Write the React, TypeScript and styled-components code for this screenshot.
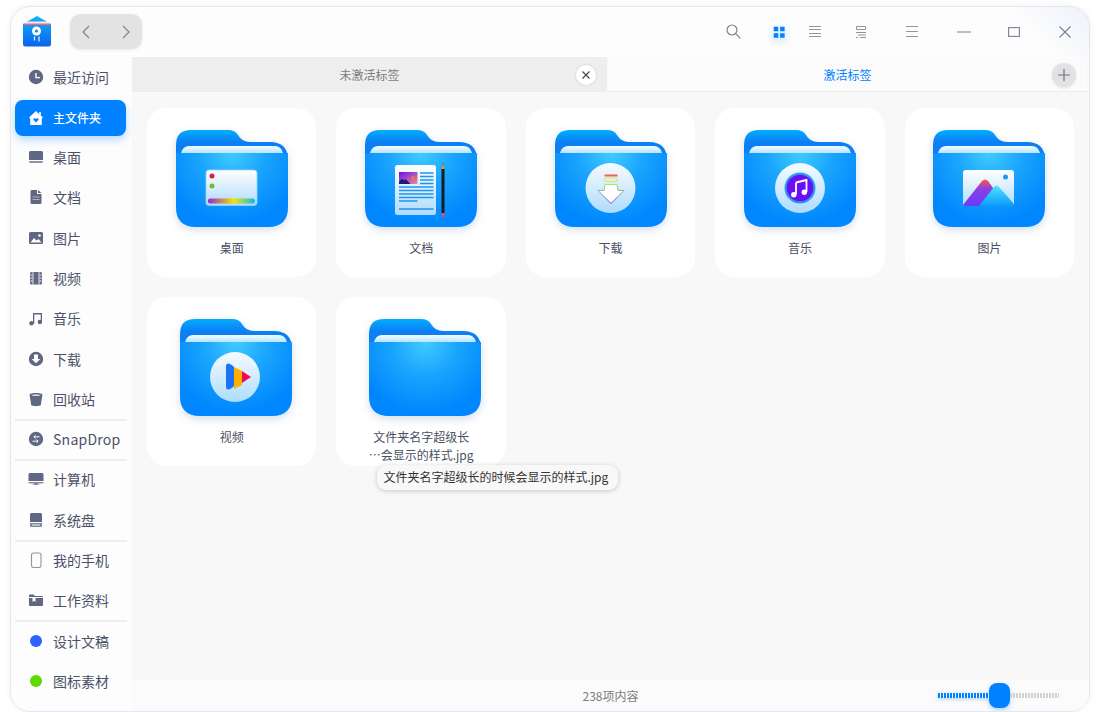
import React from "react";
import styled, { createGlobalStyle } from "styled-components";

const Global = createGlobalStyle`
  html, body { margin: 0; padding: 0; background: #fff; }
  * { box-sizing: border-box; }
  body { font-family: "Noto Sans CJK SC", "Noto Sans", sans-serif; }
`;

const Page = styled.div`
  width: 1100px;
  height: 712px;
  padding: 6px 10px 0;
  overflow: hidden;
`;
const Win = styled.div`
  height: 706px;
  display: flex;
  flex-direction: column;
  border: 1px solid #e6e7ec;
  border-radius: 20px;
  overflow: hidden;
  background: linear-gradient(225deg, #eef2fb 0, #fdfdfd 60px, #fdfdfd 100%);
  box-shadow: 0 0 6px rgba(0, 0, 0, 0.06);
`;
const TitleBar = styled.header`
  height: 50px;
  flex: none;
  display: flex;
  align-items: center;
  padding: 0 14px 1px 11px;
`;
const Logo = styled.svg`
  width: 30px;
  height: 31px;
  margin-right: 18px;
`;
const NavGroup = styled.div`
  width: 72px;
  height: 35px;
  border-radius: 10px;
  background: #e3e3e3;
  box-shadow: 0 1px 3px rgba(0, 0, 0, 0.08);
  display: flex;
  align-items: center;
  justify-content: space-between;
  padding: 0 10px;
`;
const Actions = styled.div`
  margin-left: auto;
  display: flex;
  align-items: center;
`;
const Action = styled.button<{ $after?: number; $active?: boolean }>`
  width: 20px;
  height: 20px;
  padding: 0;
  border: 0;
  background: none;
  display: flex;
  align-items: center;
  justify-content: center;
  margin-right: ${(p) => p.$after ?? 0}px;
  color: ${(p) => (p.$active ? "#0081ff" : "#7b8193")};
  filter: ${(p) => (p.$active ? "drop-shadow(0 3px 4px rgba(0,129,255,.35))" : "none")};
`;
const Body = styled.div`
  flex: 1;
  min-height: 0;
  display: flex;
`;
const Sidebar = styled.nav`
  width: 121px;
  flex: none;
  display: flex;
  flex-direction: column;
  padding-top: 0.5px;
`;
const NavItem = styled.div<{ $active?: boolean; $latin?: boolean }>`
  height: 36px;
  margin: 2.15px 6px 2.15px 4px;
  flex: none;
  padding: 0 0 ${(p) => (p.$active ? 0 : 2)}px 13px;
  display: flex;
  align-items: center;
  gap: 9px;
  border-radius: 8px;
  white-space: nowrap;
  font-size: ${(p) => (p.$active ? 12 : 14)}px;
  font-weight: ${(p) => (p.$active ? 500 : 400)};
  letter-spacing: ${(p) => (p.$latin ? "0.25px" : "0")};
  color: ${(p) => (p.$active ? "#fff" : "#4b5268")};
  background: ${(p) => (p.$active ? "#0081ff" : "transparent")};
  box-shadow: ${(p) => (p.$active ? "0 4px 8px rgba(0,129,255,.28)" : "none")};
  svg { flex: none; color: ${(p) => (p.$active ? "#fff" : "#5f6782")}; }
`;
const Rule = styled.div`
  height: 2px;
  margin: -1px 5px -1px 4px;
  background: #eeeef0;
  flex: none;
`;
const Dot = styled.span<{ $color: string }>`
  width: 12px;
  height: 12px;
  margin: 0 2px;
  border-radius: 50%;
  background: ${(p) => p.$color};
  flex: none;
`;
const Main = styled.main`
  flex: 1;
  min-width: 0;
  display: flex;
  flex-direction: column;
  background: #f8f8f8;
`;
const Tabs = styled.div`
  height: 35px;
  flex: none;
  display: flex;
  gap: 1px;
  font-size: 12px;
  margin-right: 2px;
`;
const Tab = styled.div<{ $active?: boolean }>`
  flex: ${(p) => (p.$active ? "1" : "0 0 475px")};
  position: relative;
  display: flex;
  align-items: center;
  justify-content: center;
  color: ${(p) => (p.$active ? "#0081ff" : "#7c7c7c")};
  background: ${(p) => (p.$active ? "#fbfbfb" : "#eeeeee")};
  border-bottom: 1px solid #ececec;
`;
const TabClose = styled.button`
  position: absolute;
  right: 11px;
  top: 7.5px;
  width: 20px;
  height: 20px;
  padding: 0;
  border: 0;
  border-radius: 50%;
  background: #fff;
  box-shadow: 0 0 3px rgba(0, 0, 0, 0.14);
  display: flex;
  align-items: center;
  justify-content: center;
`;
const TabAdd = styled.button`
  position: absolute;
  right: 11px;
  top: 5.5px;
  width: 24px;
  height: 24px;
  padding: 0;
  border: 0;
  border-radius: 50%;
  background: #e2e2e2;
  box-shadow: 0 1px 3px rgba(0, 0, 0, 0.1);
  display: flex;
  align-items: center;
  justify-content: center;
`;
const Content = styled.section`
  flex: 1;
  min-height: 0;
  padding: 16px 14px 0 15px;
  display: grid;
  grid-template-columns: repeat(5, 169.45px);
  grid-auto-rows: 169px;
  gap: 20px;
  align-content: start;
`;
const Card = styled.article`
  position: relative;
  background: #fff;
  border-radius: 20px;
  padding-top: 22px;
  display: flex;
  flex-direction: column;
  align-items: center;
`;
const FolderSvg = styled.svg<{ $shift?: boolean }>`
  width: 112px;
  height: 97px;
  flex: none;
  overflow: visible;
  margin-left: ${(p) => (p.$shift ? 8 : 0)}px;
  filter: drop-shadow(0 3px 4px rgba(0, 60, 130, 0.17));
`;
const Label = styled.div`
  margin-top: 12px;
  font-size: 12px;
  line-height: 17.5px;
  color: #4a4f64;
  text-align: center;
  white-space: nowrap;
`;
const Tip = styled.div`
  position: absolute;
  left: 41px;
  top: 168px;
  width: 241px;
  height: 25px;
  padding-left: 6px;
  border-radius: 9px;
  background: #f8f8f8;
  box-shadow: 0 1px 5px rgba(0, 0, 0, 0.2);
  font-size: 12px;
  line-height: 24px;
  color: #333;
  white-space: nowrap;
  z-index: 2;
`;
const StatusBar = styled.footer`
  height: 32px;
  flex: none;
  display: grid;
  grid-template-columns: 1fr auto 1fr;
  align-items: center;
  background: #fbfbfb;
  font-size: 12px;
  color: #7c7c7c;
`;
const StatusText = styled.span`
  grid-column: 2;
`;
const Slider = styled.div`
  grid-column: 3;
  justify-self: end;
  margin-right: 30px;
  display: flex;
  align-items: center;
`;
const Track = styled.div<{ $w: number; $on?: boolean }>`
  width: ${(p) => p.$w}px;
  height: 5px;
  background: repeating-linear-gradient(
    90deg,
    ${(p) => (p.$on ? "#0081ff" : "#d2d2d2")} 0 2px,
    transparent 2px 3px
  );
  box-shadow: ${(p) => (p.$on ? "0 1px 4px rgba(0,129,255,.35)" : "none")};
`;
const Thumb = styled.div`
  width: 21px;
  height: 25px;
  border-radius: 8px;
  background: #0081ff;
  box-shadow: 0 2px 5px rgba(0, 129, 255, 0.35);
`;

const Ico: React.FC<{ children: React.ReactNode; size?: number }> = ({ children, size = 16 }) => (
  <svg width={size} height={size} viewBox="0 0 16 16" fill="currentColor" aria-hidden="true">
    {children}
  </svg>
);

const sidebarIcons: Record<string, React.ReactNode> = {
  clock: (
    <>
      <circle cx="8" cy="8" r="7.2" />
      <path d="M8 4v4.6h4" fill="none" stroke="#fff" strokeWidth="1.4" />
    </>
  ),
  home: (
    <>
      <path d="M8 1 1 7.6l1.2 1V15h11.600V8.600l1.200-1-2.200-2V2h-1.600v2.200z" />
      <path d="M8 12.500 5.600 10c-1-1.200.9-2.600 2.400-1.200 1.500-1.400 3.400 0 2.400 1.200z" fill="#0081ff" />
    </>
  ),
  desktop: (
    <>
      <path d="M2.500 2h11A1.500 1.500 0 0 1 15 3.500V11H1V3.500A1.500 1.500 0 0 1 2.500 2z" />
      <path d="M1 12h14v.5a1.500 1.500 0 0 1-1.500 1.500h-11A1.500 1.500 0 0 1 1 12.500z" opacity=".7" />
    </>
  ),
  doc: (
    <>
      <path d="M3.500 1H9v4h4.500v8.500A1.500 1.500 0 0 1 12 15H4a1.500 1.500 0 0 1-1.500-1.500v-11A1.500 1.500 0 0 1 3.500 1z" />
      <path d="M10 1l3.500 3H10z" />
      <path d="M4.500 8h7M4.500 10.500h7" stroke="#fff" strokeOpacity=".5" />
    </>
  ),
  image: (
    <>
      <rect x="1" y="2" width="14" height="12" rx="1.600" />
      <path d="M2.500 12.500 6 8l2.500 2.600L10.500 9l3 3.500z" fill="#fff" />
      <circle cx="11.500" cy="5.500" r="1.300" fill="#fff" />
    </>
  ),
  video: (
    <>
      <rect x="2" y="2" width="12" height="12.500" rx="1.500" />
      <path d="M5 2v12.500M11 2v12.500" stroke="#fff" strokeOpacity=".8" />
      <path d="M2.500 5h2M2.500 8h2M2.500 11h2M11.500 5h2M11.500 8h2M11.500 11h2" stroke="#fff" />
    </>
  ),
  music: (
    <>
      <path d="M5 3h9v9.500h-1.300V4.500H6.300V13.500H5z" />
      <circle cx="3.500" cy="13.300" r="2.200" />
      <circle cx="11.800" cy="12" r="2.200" />
    </>
  ),
  download: (
    <>
      <circle cx="8" cy="8" r="7.200" />
      <path d="M6 3.500h4V8h2.400L8 12.300 3.600 8H6z" fill="#fff" />
    </>
  ),
  trash: <path d="M1.500 3.500C3 1.500 13 1.500 14.500 3.500L12.800 14c-.3 1.500-9.300 1.500-9.600 0zM3.200 4.200c2 .8 7.600.8 9.600 0-2-1-7.600-1-9.600 0z" fillRule="evenodd" />,
  snap: (
    <>
      <circle cx="8" cy="8" r="7.200" />
      <path d="M11.500 5.800H6M7.500 4.200 5.800 5.800l1.700 1.600M4.500 10.200H10M8.500 8.600l1.700 1.600-1.700 1.600" fill="none" stroke="#fff" strokeWidth="1" />
    </>
  ),
  computer: (
    <>
      <path d="M2 2h12a1.500 1.500 0 0 1 1.500 1.500V10H.5V3.500A1.500 1.500 0 0 1 2 2z" />
      <path d="M.5 11h15c0 1-.5 1.500-1.500 1.500H10v1h1.500v.5h-7v-.5H6v-1H2c-1 0-1.500-.5-1.500-1.500z" opacity=".75" />
    </>
  ),
  disk: (
    <>
      <path d="M3.500 1h9A1.500 1.500 0 0 1 14 2.500V10H2V2.500A1.500 1.500 0 0 1 3.500 1z" />
      <path d="M2 11h12v2.500a1.500 1.500 0 0 1-1.500 1.500h-9A1.500 1.500 0 0 1 2 13.500zM4 12.500v1h8v-1z" fillRule="evenodd" opacity=".8" />
    </>
  ),
  phone: <rect x="3.500" y="1" width="9.500" height="14.500" rx="2" fill="none" stroke="#8d94ab" strokeWidth="1.100" />,
  folder: (
    <>
      <path d="M1 5V3.500A1 1 0 0 1 2 2.500h3.500l1.500 1.500h7a1 1 0 0 1 1 1V5z" />
      <path d="M1 6h3.500v4L6 8.800 7.500 10V6H15v7a1 1 0 0 1-1 1H2a1 1 0 0 1-1-1z" />
    </>
  ),
};

type SideEntry = { label: string; icon?: string; dot?: string; active?: boolean; latin?: boolean; rule?: boolean };
const sideEntries: SideEntry[] = [
  { label: "最近访问", icon: "clock" },
  { label: "主文件夹", icon: "home", active: true },
  { label: "桌面", icon: "desktop" },
  { label: "文档", icon: "doc" },
  { label: "图片", icon: "image" },
  { label: "视频", icon: "video" },
  { label: "音乐", icon: "music" },
  { label: "下载", icon: "download" },
  { label: "回收站", icon: "trash", rule: true },
  { label: "SnapDrop", icon: "snap", latin: true, rule: true },
  { label: "计算机", icon: "computer" },
  { label: "系统盘", icon: "disk", rule: true },
  { label: "我的手机", icon: "phone" },
  { label: "工作资料", icon: "folder", rule: true },
  { label: "设计文稿", dot: "#2d63ff" },
  { label: "图标素材", dot: "#5cdb00" },
];

const Inset: React.FC<{ kind: string; id: string }> = ({ kind, id }) => {
  if (kind === "desktop")
    return (
      <>
        <rect x="30" y="40" width="51" height="35.500" rx="3" fill={`url(#${id}w)`} stroke="#9bd3fb" strokeWidth=".8" />
        <circle cx="36" cy="46" r="2.500" fill="#d8203c" />
        <circle cx="36" cy="56" r="2.500" fill="#7cb82a" />
        <rect x="32" y="68.500" width="47" height="5" rx="2" fill={`url(#${id}r)`} />
      </>
    );
  if (kind === "doc")
    return (
      <>
        <rect x="30" y="35" width="41" height="50" rx="2.500" fill={`url(#${id}w)`} />
        <rect x="34" y="42" width="18.500" height="12" fill={`url(#${id}p)`} />
        <path d="M34 54v-2l3-3.500 2 2 1.500-1.500 3 3 2 2z" fill="#1d1a78" />
        <circle cx="48" cy="48" r="1.800" fill="#ff6a55" />
        <path
          d="M55 43h13.500M55 46.500h13.500M55 50h13.500M55 53.500h13.500M34 57h34.500M34 60.500h34.500M34 64h34.500M34 67.500h34.500M34 71h18.500M34 79h34.500"
          stroke="#1e95f0"
          strokeWidth="1.300"
        />
        <path d="M76.500 39 78 32.500 79.500 39v44h-3z" fill="#1c1c22" />
        <path d="M76.500 39 78 32.500 79.500 39z" fill="#c8a26a" />
        <rect x="76.500" y="83" width="3" height="4" rx="1" fill="#e34b7e" />
      </>
    );
  if (kind === "download")
    return (
      <>
        <circle cx="55.500" cy="58" r="25" fill={`url(#${id}c)`} />
        <rect x="49.500" y="44.500" width="13" height="2" fill="#f0604f" />
        <rect x="49.500" y="48" width="13" height="3.500" rx="1.700" fill="none" stroke="#dfe35a" strokeWidth="1" />
        <path d="M50 54.500h12l1 6h6l-13 13-13-13h6z" fill="#fff" stroke={`url(#${id}a)`} strokeWidth="1" strokeLinejoin="round" />
      </>
    );
  if (kind === "music")
    return (
      <>
        <circle cx="56" cy="58" r="25" fill={`url(#${id}c)`} />
        <circle cx="56" cy="58" r="15.500" fill="#2c9ce8" />
        <circle cx="56" cy="58" r="13.300" fill="#6a0ff5" />
        <path d="M52 52.500 62.500 50v12" fill="none" stroke="#fff" strokeWidth="1.800" />
        <path d="M52 52.500V64.500" stroke="#fff" strokeWidth="1.800" />
        <circle cx="49.800" cy="64.800" r="2.700" fill="#fff" />
        <circle cx="60.300" cy="62.300" r="2.700" fill="#fff" />
      </>
    );
  if (kind === "picture")
    return (
      <>
        <rect x="30" y="40" width="51" height="36" rx="3" fill={`url(#${id}w)`} />
        <circle cx="72.500" cy="47" r="2.500" fill="#1a9af5" />
        <path d="M30 75 49 51q3-3 6 0L66 66 56 76H33q-2 0-3-1z" fill={`url(#${id}m)`} />
        <path d="M46 76 61 57q2.500-3 5 0L81 74q-.5 2-2 2z" fill={`url(#${id}n)`} />
      </>
    );
  if (kind === "video")
    return (
      <>
        <circle cx="55" cy="58" r="25" fill={`url(#${id}c)`} />
        <path d="M54 48 62 52V66L54 70z" fill="#ffb000" />
        <path d="M62 52 71 58 62 64z" fill="#f5075f" />
        <path d="M46 47q0-2.500 2-2.500c3 .5 6 3 6 4V67c-2 2-4 3.500-6 3.500q-2 0-2-2.500z" fill="#1b72f2" />
      </>
    );
  return null;
};

const Folder: React.FC<{ kind: string; shift?: boolean }> = ({ kind, shift }) => {
  const id = `f-${kind}-`;
  return (
    <FolderSvg $shift={shift} viewBox="0 0 112 97" aria-hidden="true">
      <defs>
        <linearGradient id={`${id}b`} x1="0" y1="0" x2="0" y2="1">
          <stop offset="0" stopColor="#00aeff" />
          <stop offset=".3" stopColor="#0d7ff5" />
        </linearGradient>
        <linearGradient id={`${id}s`} x1="0" y1="0" x2="0" y2="1">
          <stop offset="0" stopColor="#f4fcff" />
          <stop offset="1" stopColor="#b6e6ff" />
        </linearGradient>
        <radialGradient id={`${id}f`} gradientUnits="userSpaceOnUse" cx="56" cy="23" r="72">
          <stop offset="0" stopColor="#41cbff" />
          <stop offset=".45" stopColor="#1ba5fd" />
          <stop offset="1" stopColor="#0086fe" />
        </radialGradient>
        <linearGradient id={`${id}w`} x1="0" y1="0" x2="0" y2="1">
          <stop offset="0" stopColor="#ffffff" />
          <stop offset="1" stopColor="#b0dbfb" />
        </linearGradient>
        <linearGradient id={`${id}c`} x1="0" y1="0" x2="0" y2="1">
          <stop offset="0" stopColor="#f6fbff" />
          <stop offset="1" stopColor="#aedcfd" />
        </linearGradient>
        <linearGradient id={`${id}r`}>
          <stop offset="0" stopColor="#8a2be2" />
          <stop offset=".35" stopColor="#d4a040" />
          <stop offset=".55" stopColor="#f0e800" />
          <stop offset="1" stopColor="#12b8e8" />
        </linearGradient>
        <linearGradient id={`${id}p`} x1="0" y1="0" x2="1" y2="1">
          <stop offset="0" stopColor="#6a10f0" />
          <stop offset="1" stopColor="#f08a8a" />
        </linearGradient>
        <linearGradient id={`${id}a`} x1="0" y1="0" x2="0" y2="1">
          <stop offset="0" stopColor="#a6e86a" />
          <stop offset="1" stopColor="#7a3cf0" />
        </linearGradient>
        <linearGradient id={`${id}m`} x1="0" y1="0" x2="0" y2="1">
          <stop offset="0" stopColor="#ff5a30" />
          <stop offset=".35" stopColor="#8b3fe8" />
          <stop offset="1" stopColor="#6a3cf5" />
        </linearGradient>
        <linearGradient id={`${id}n`} x1="0" y1="0" x2="0" y2="1">
          <stop offset="0" stopColor="#4fe4ff" />
          <stop offset="1" stopColor="#0a9cfa" />
        </linearGradient>
      </defs>
      <path d="M0 40V15Q0 0 15 0H52Q59 0 62 5 66 12 74 12H94Q112 12 112 30V40Z" fill={`url(#${id}b)`} />
      <path d="M5 23Q7 16 13 16H99Q105 16 107 23Z" fill={`url(#${id}s)`} />
      <path d="M0 23H112V77Q112 97 92 97H20Q0 97 0 77Z" fill={`url(#${id}f)`} />
      <Inset kind={kind} id={id} />
    </FolderSvg>
  );
};

const folders = [
  { kind: "desktop", label: ["桌面"] },
  { kind: "doc", label: ["文档"] },
  { kind: "download", label: ["下载"] },
  { kind: "music", label: ["音乐"] },
  { kind: "picture", label: ["图片"] },
  { kind: "video", label: ["视频"], shift: true },
  { kind: "plain", label: ["文件夹名字超级长", "⋯会显示的样式.jpg"], shift: true, tip: "文件夹名字超级长的时候会显示的样式.jpg" },
];

export default function App() {
  return (
    <Page>
      <Global />
      <Win>
        <TitleBar>
          <Logo viewBox="0 0 30 31" aria-hidden="true">
            <defs>
              <linearGradient id="logoG" x1="0" y1="0" x2="0" y2="1">
                <stop offset="0" stopColor="#12b5f5" />
                <stop offset="1" stopColor="#0a62ee" />
              </linearGradient>
            </defs>
            <path d="M1 8 15 0l14 8v20a2.500 2.500 0 0 1-2.500 2.500h-23A2.500 2.500 0 0 1 1 28z" fill="url(#logoG)" />
            <path d="M3 5.500h24l1 1V8H2V6.500z" fill="#fbe9ec" />
            <path d="M2 7.500h26V9H2z" fill="#f2627b" />
            <circle cx="14.500" cy="15" r="4.500" fill="#fff" />
            <circle cx="14.500" cy="15" r="1.600" fill="#1685f0" />
            <path d="M12.500 20.500v4M17 20.500v5" stroke="#fff" strokeWidth="1.200" opacity=".9" />
          </Logo>
          <NavGroup>
            <svg width="12" height="16" viewBox="0 0 12 16" aria-hidden="true">
              <path d="M9 2 3 8l6 6" fill="none" stroke="#7f8598" strokeWidth="1.200" />
            </svg>
            <svg width="12" height="16" viewBox="0 0 12 16" aria-hidden="true">
              <path d="m3 2 6 6-6 6" fill="none" stroke="#7f8598" strokeWidth="1.200" />
            </svg>
          </NavGroup>
          <Actions>
            <Action $after={26} aria-label="search">
              <svg width="15" height="15" viewBox="0 0 15 15" fill="none" stroke="currentColor" strokeWidth="1.200">
                <circle cx="6" cy="6" r="5" />
                <path d="m9.700 9.700 4.600 4.600" />
              </svg>
            </Action>
            <Action $after={16} $active aria-label="icons">
              <Ico size={12}>
                <path d="M1 1h6v6H1zM9.500 1h6v6h-6zM1 9.500h6v6H1zM9.500 9.500h6v6h-6z" />
              </Ico>
            </Action>
            <Action $after={26} aria-label="list">
              <svg width="14" height="12" viewBox="0 0 14 12" stroke="#8e93a5" strokeWidth="1">
                <path d="M1 .5h12M1 3.500h12M1 7.500h12M1 10.500h12" />
              </svg>
            </Action>
            <Action $after={31} aria-label="tree">
              <svg width="12" height="12" viewBox="0 0 12 12" fill="none" stroke="#8e93a5" strokeWidth="1">
                <path d="M1.500.5h9v3h-9zM1 6.500h10M1 11.500h2M5 11.500h6M3 9h8" />
              </svg>
            </Action>
            <Action $after={32} aria-label="menu">
              <svg width="12" height="12" viewBox="0 0 12 12" stroke="#8e93a5" strokeWidth="1">
                <path d="M0 .5h12M0 5.500h12M0 10.500h12" />
              </svg>
            </Action>
            <Action $after={30} aria-label="minimise">
              <svg width="14" height="2" viewBox="0 0 14 2" stroke="#7b8193" strokeWidth="1.200">
                <path d="M0 1h14" />
              </svg>
            </Action>
            <Action $after={31} aria-label="maximise">
              <svg width="12" height="10" viewBox="0 0 12 10" fill="none" stroke="#7b8193" strokeWidth="1.100">
                <rect x=".6" y=".6" width="10.800" height="8.800" />
              </svg>
            </Action>
            <Action aria-label="close">
              <svg width="12" height="12" viewBox="0 0 12 12" stroke="#7b8193" strokeWidth="1.100">
                <path d="m.5.5 11 11M11.500.5l-11 11" />
              </svg>
            </Action>
          </Actions>
        </TitleBar>
        <Body>
          <Sidebar>
            {sideEntries.map((e) => (
              <React.Fragment key={e.label}>
                <NavItem $active={e.active} $latin={e.latin}>
                  {e.dot ? <Dot $color={e.dot} /> : <Ico>{sidebarIcons[e.icon!]}</Ico>}
                  {e.label}
                </NavItem>
                {e.rule && <Rule />}
              </React.Fragment>
            ))}
          </Sidebar>
          <Main>
            <Tabs>
              <Tab>
                未激活标签
                <TabClose aria-label="close tab">
                  <svg width="8" height="8" viewBox="0 0 8 8" stroke="#444" strokeWidth="1.100">
                    <path d="m.5.5 7 7M7.500.5l-7 7" />
                  </svg>
                </TabClose>
              </Tab>
              <Tab $active>
                激活标签
                <TabAdd aria-label="new tab">
                  <svg width="12" height="12" viewBox="0 0 12 12" stroke="#6c7286" strokeWidth="1.200">
                    <path d="M6 0v12M0 6h12" />
                  </svg>
                </TabAdd>
              </Tab>
            </Tabs>
            <Content>
              {folders.map((f) => (
                <Card key={f.kind}>
                  <Folder kind={f.kind} shift={f.shift} />
                  <Label>
                    {f.label.map((l) => (
                      <div key={l}>{l}</div>
                    ))}
                  </Label>
                  {f.tip && <Tip>{f.tip}</Tip>}
                </Card>
              ))}
            </Content>
            <StatusBar>
              <StatusText>238项内容</StatusText>
              <Slider>
                <Track $w={51} $on />
                <Thumb />
                <Track $w={49} />
              </Slider>
            </StatusBar>
          </Main>
        </Body>
      </Win>
    </Page>
  );
}
